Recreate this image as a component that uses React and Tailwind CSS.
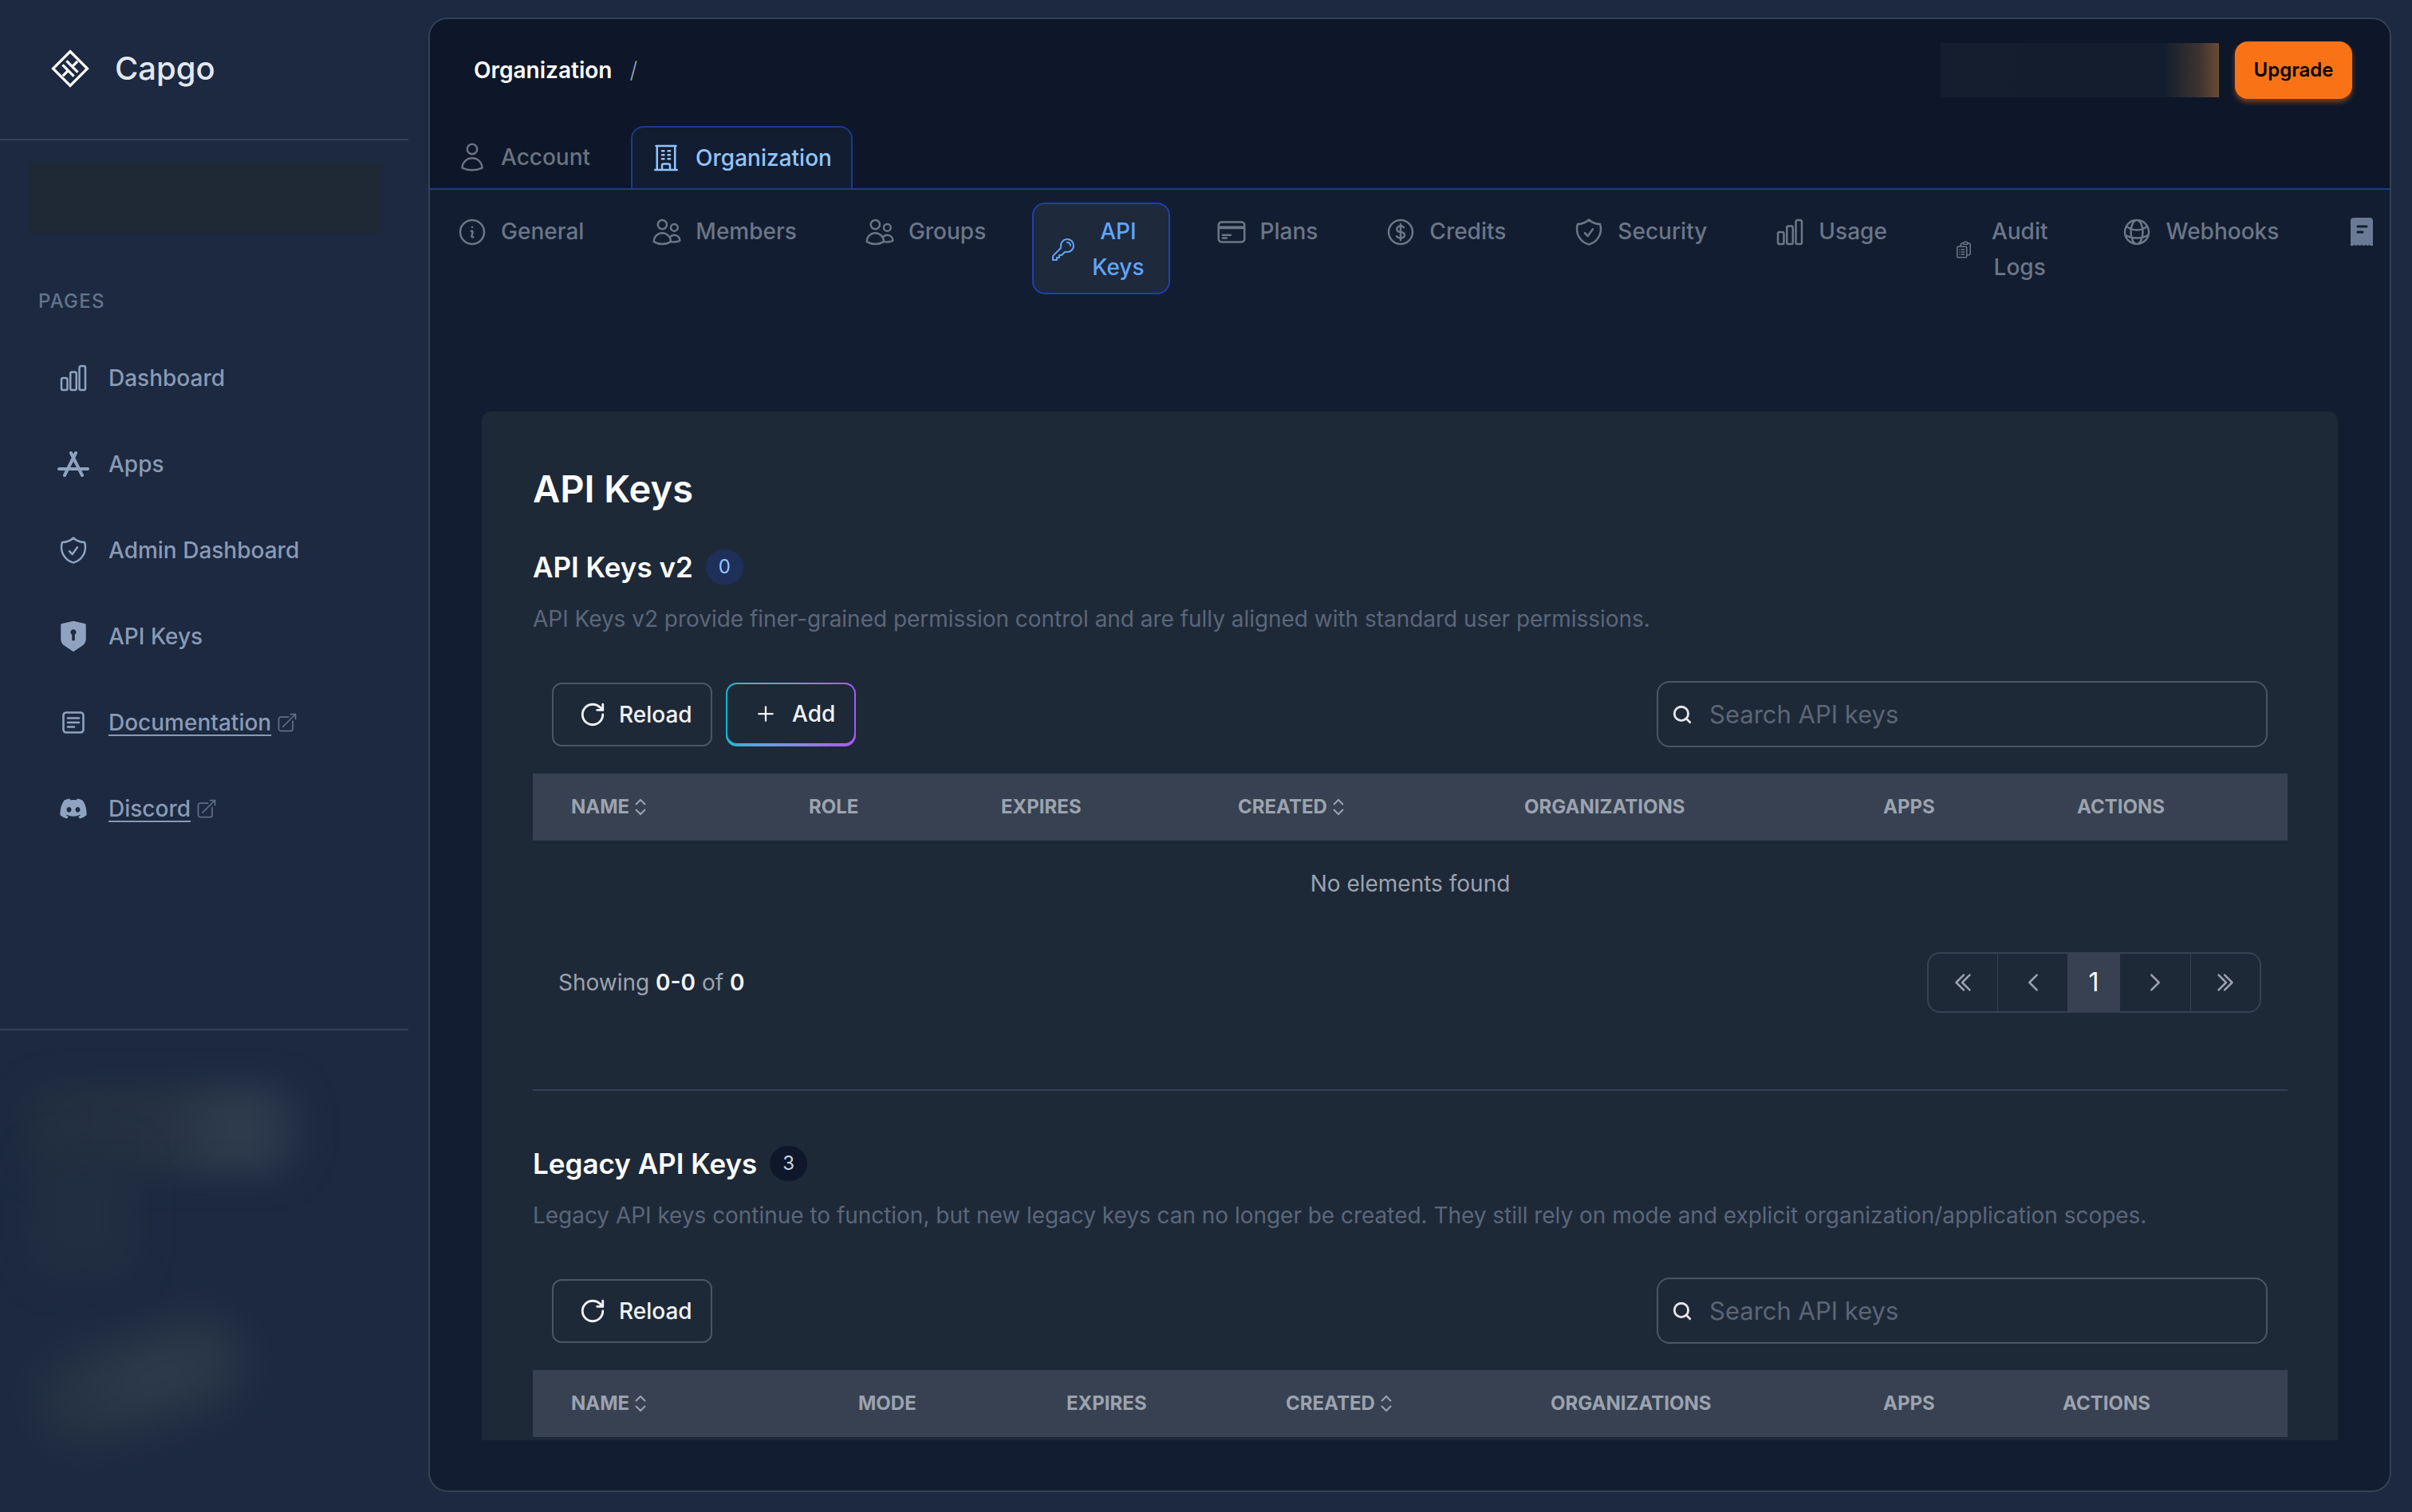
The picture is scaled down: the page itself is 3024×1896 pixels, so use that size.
import React from "react";
import {
  HiOutlineChartBar, HiOutlineShieldCheck, HiOutlineArrowTopRightOnSquare, HiOutlineUser,
  HiOutlineBuildingOffice, HiOutlineInformationCircle, HiOutlineUsers, HiOutlineKey, HiOutlineCreditCard,
  HiOutlineCurrencyDollar, HiOutlineClipboardDocumentList, HiOutlineGlobeAlt,
  HiOutlineChevronDoubleLeft, HiOutlineChevronLeft, HiOutlineChevronRight, HiOutlineChevronDoubleRight,
} from "react-icons/hi2";
import { RiShieldKeyholeFill } from "react-icons/ri";
import { FaDiscord } from "react-icons/fa";
import { RotateCw, Plus, Search } from "lucide-react";

function Logo() {
  return (
    <svg viewBox="0 0 48 48" className="w-[48px] h-[48px] shrink-0" fill="none" stroke="white" strokeWidth="3.2">
      <path d="M24 2.5 45.5 24 24 45.500 2.500 24Z" />
      <g transform="rotate(-45 24 24)">
        <path d="M20.500 14v20M27.500 14v20M11 24h9.500M27.500 24H37" />
      </g>
    </svg>
  );
}

function AppStoreIcon() {
  return (
    <svg viewBox="0 0 40 32" className="w-[40px] h-[32px]" fill="none" stroke="currentColor" strokeWidth="4" strokeLinecap="round">
      <path d="M23 2 9 30M17 2l14 28M2 22h36" />
    </svg>
  );
}

function DocIcon() {
  return (
    <svg viewBox="0 0 28 28" className="w-[28px] h-[28px]" fill="none" stroke="currentColor" strokeWidth="2.600" strokeLinecap="round">
      <rect x="1.500" y="1.500" width="25" height="25" rx="3.500" />
      <path d="M7 8.500h14M7 14h14M7 19.500h8" />
    </svg>
  );
}

function ReceiptIcon() {
  return (
    <svg viewBox="0 0 28 36" className="w-[28px] h-[36px] my-[5px] text-[#6b7a94]">
      <path
        fill="currentColor"
        d="M0 4a4 4 0 0 1 4-4h20a4 4 0 0 1 4 4v31q-2.300 1-4.600-1-2.300 2-4.700 0-2.300 2-4.700 0-2.400 2-4.700 0-2.300 2-4.700 0-2.300 2-4.600 1Z"
      />
      <path stroke="#121d31" strokeWidth="3" strokeLinecap="round" d="M9 11h11M9 18h6" />
    </svg>
  );
}

function SortIcon() {
  return (
    <svg viewBox="0 0 16 22" className="w-[16px] h-[22px] shrink-0" fill="none" stroke="currentColor" strokeWidth="2">
      <path d="m2 8 6-6 6 6M2 14l6 6 6-6" />
    </svg>
  );
}

const navItems = [
  { label: "Dashboard", icon: <HiOutlineChartBar className="w-[40px] h-[40px]" /> },
  { label: "Apps", icon: <AppStoreIcon /> },
  { label: "Admin Dashboard", icon: <HiOutlineShieldCheck className="w-[40px] h-[40px]" /> },
  { label: "API Keys", icon: <RiShieldKeyholeFill className="w-[42px] h-[42px]" /> },
  { label: "Documentation", icon: <DocIcon />, link: true },
  { label: "Discord", icon: <FaDiscord className="w-[36px] h-[36px]" />, link: true },
];

function NavItem({ item }) {
  return (
    <li className="h-[108px] flex items-center">
      <span className="w-[48px] ml-[68px] mr-[20px] flex justify-center text-[#8fa3c0]">{item.icon}</span>
      <span className={`text-[28px] leading-[40px] font-medium text-[#8a9ab5] ${item.link ? "underline underline-offset-[5px]" : ""}`}>{item.label}</span>
      {item.link && <HiOutlineArrowTopRightOnSquare className="w-[28px] h-[28px] ml-[6px] text-[#5f6d85]" />}
    </li>
  );
}

function Sidebar() {
  return (
    <aside className="w-[512px] h-full shrink-0 flex flex-col">
      <div className="h-[176px] border-b-2 border-[#334155] pl-[64px] pt-[62px] flex items-start gap-[32px]">
        <Logo />
        <span className="text-[40px] leading-[48px] font-medium text-[#e2e8f0]">Capgo</span>
      </div>
      <div className="ml-[37px] mt-[29px] w-[442px] h-[87px] bg-[#1f2835] blur-[1.5px]" />
      <div className="mt-[68px] pl-[48px] h-[36px] text-[24px] leading-[36px] font-medium tracking-[0.05em] text-[#64748b]">PAGES</div>
      <ul className="mt-[24px]">
        {navItems.map((it) => <NavItem key={it.label} item={it} />)}
      </ul>
      <div className="relative mt-auto h-[606px] border-t-2 border-[#334155] overflow-hidden">
        <div className="absolute left-[28px] top-[70px] w-[350px] h-[110px] rounded-[40px] bg-[linear-gradient(90deg,#222f40,#263243_50%,#303d4f_78%,#263146)] blur-[20px]" />
        <div className="absolute left-[40px] top-[150px] w-[130px] h-[160px] rounded-[30px] bg-[#212e41] blur-[22px]" />
        <div className="absolute left-[40px] top-[375px] w-[270px] h-[130px] rounded-[60px] -rotate-[18deg] bg-[radial-gradient(ellipse_at_60%_50%,#303d4f,#212e40_85%)] blur-[24px]" />
      </div>
    </aside>
  );
}

function TopTab({ icon, label, active }) {
  if (active) {
    return (
      <div className="h-[78px] -mb-[2px] ml-[51px] pl-[22px] pr-[24px] flex items-center gap-[17px] bg-[#121d31] border-2 border-b-0 border-[#1e3a8a] rounded-t-[16px] text-[#93c5fd]">
        {icon}
        <span className="text-[28px] leading-[40px] font-medium">{label}</span>
      </div>
    );
  }
  return (
    <div className="h-[78px] flex items-center gap-[16px] text-[#6b7280]">
      {icon}
      <span className="text-[28px] leading-[40px] font-medium">{label}</span>
    </div>
  );
}

const icon40 = "w-[40px] h-[40px] shrink-0";
const subTabs = [
  { label: "General", icon: <HiOutlineInformationCircle className={icon40} /> },
  { label: "Members", icon: <HiOutlineUsers className={icon40} /> },
  { label: "Groups", icon: <HiOutlineUsers className={icon40} /> },
  { label: "API Keys", icon: <HiOutlineKey className="w-[32px] h-[32px] shrink-0" />, active: true, box: "pl-[21px] pr-[30px] gap-[20px]" },
  { label: "Plans", icon: <HiOutlineCreditCard className={icon40} />, box: "pl-[27px] pr-[28px] gap-[16px]" },
  { label: "Credits", icon: <HiOutlineCurrencyDollar className={icon40} /> },
  { label: "Security", icon: <HiOutlineShieldCheck className={icon40} /> },
  { label: "Usage", icon: <HiOutlineChartBar className={icon40} /> },
  { label: "Audit Logs", icon: <HiOutlineClipboardDocumentList className="w-[24px] h-[24px] shrink-0" />, box: "pl-[24px] pr-[36px] gap-[23px]" },
  { label: "Webhooks", icon: <HiOutlineGlobeAlt className={icon40} /> },
  { label: "", icon: <ReceiptIcon />, box: "pl-[30px] pr-[28px]" },
];

function SubTab({ tab }) {
  return (
    <div
      className={`shrink-0 flex items-center border-2 rounded-[16px] pt-[12px] pb-[9px] ${tab.box || "pl-[24px] pr-[28px] gap-[16px]"} ${
        tab.active ? "bg-[#1e293b] border-[#1e40af] text-[#60a5fa]" : "border-transparent text-[#6b7688]"
      }`}
    >
      {tab.icon}
      {tab.label && <span className="w-min text-center text-[28px] leading-[45px] font-medium">{tab.label}</span>}
    </div>
  );
}

function Button({ icon, label }) {
  return (
    <button className="h-[80px] w-[201px] rounded-[12px] border-2 border-[#4b5563] flex items-center pl-[32px] gap-[16px] text-[#f1f5f9]">
      {icon}
      <span className="text-[28px] leading-[40px] font-medium">{label}</span>
    </button>
  );
}

function SearchBox() {
  return (
    <div className="w-[766px] h-[83px] rounded-[16px] border-2 border-[#4b5563] flex items-center pl-[17px] gap-[21px]">
      <Search className="w-[26px] h-[26px] text-[#e5e7eb]" strokeWidth={2.6} />
      <span className="text-[31px] leading-[40px] text-[#5b6675]">Search API keys</span>
    </div>
  );
}

function Section({ title, count, badge, desc, children }) {
  return (
    <>
      <div className="flex items-center h-[44px] gap-[16px]">
        <h3 className="text-[35px] leading-[44px] font-semibold text-white">{title}</h3>
        <span className={`w-[47px] h-[44px] rounded-full flex items-center justify-center text-[24px] ${badge}`}>{count}</span>
      </div>
      <p className="mt-[21px] text-[28px] leading-[44px] tracking-[-0.03px] text-[#5b6779]">{desc}</p>
      <div className="mt-[56px] h-[83px] pl-[24px] pr-[25px] flex items-center justify-between">
        {children}
        <SearchBox />
      </div>
    </>
  );
}

function TableHead({ cols }) {
  return (
    <table className="mt-[33px] w-full table-fixed border-collapse">
      <thead>
        <tr className="h-[84px] bg-[#374151] text-[#9ca3af]">
          {cols.map((c) => (
            <th key={c.label} style={{ width: c.w }} className="pl-[48px] text-left text-[24px] font-bold uppercase">
              <span className="inline-flex items-center gap-[6px]">
                {c.label}
                {c.sort && <SortIcon />}
              </span>
            </th>
          ))}
        </tr>
      </thead>
    </table>
  );
}

function Pagination() {
  const cls = "h-full flex items-center justify-center text-[#9ca3af]";
  const ic = "w-[30px] h-[30px]";
  return (
    <div className="h-[76px] flex">
      <div className="w-[89px] border-2 border-r border-[#374151] rounded-l-[16px] flex items-center justify-center text-[#9ca3af]">
        <HiOutlineChevronDoubleLeft className={ic} strokeWidth={2} />
      </div>
      <div className={`${cls} w-[87px] border-y-2 border-[#374151]`}><HiOutlineChevronLeft className={ic} strokeWidth={2} /></div>
      <div className="w-[66px] h-full bg-[#374151] flex items-center justify-center text-[32px] text-white">1</div>
      <div className={`${cls} w-[89px] border-y-2 border-r border-[#374151]`}><HiOutlineChevronRight className={ic} strokeWidth={2} /></div>
      <div className="w-[88px] border-2 border-l-0 border-[#374151] rounded-r-[16px] flex items-center justify-center text-[#9ca3af]">
        <HiOutlineChevronDoubleRight className={ic} strokeWidth={2} />
      </div>
    </div>
  );
}

const v2Cols = [
  { label: "Name", w: 298, sort: true }, { label: "Role", w: 241 }, { label: "Expires", w: 297 },
  { label: "Created", w: 359, sort: true }, { label: "Organizations", w: 450 }, { label: "Apps", w: 243 }, { label: "Actions", w: 312 },
];
const legacyCols = [
  { label: "Name", w: 360, sort: true }, { label: "Mode", w: 261 }, { label: "Expires", w: 275 },
  { label: "Created", w: 332, sort: true }, { label: "Organizations", w: 417 }, { label: "Apps", w: 225 }, { label: "Actions", w: 330 },
];

const reloadIcon = <RotateCw className="w-[34px] h-[34px]" strokeWidth={2} />;

export default function App() {
  return (
    <div className="w-[3024px] h-[1896px] flex overflow-hidden bg-[#1c2940] font-['Inter','Noto_Sans',sans-serif]">
      <Sidebar />
      <main className="flex-1 min-w-0 ml-[25px] mr-[26px] mt-[22px] mb-[25px] flex flex-col overflow-hidden rounded-[24px] border-2 border-[#334155] bg-[#121d31]">
        <header className="bg-[#0d1729] border-b-2 border-[#1e3a8a] pt-[2px]">
          <div className="h-[124px] pl-[55px] pr-[47px] flex items-center">
            <span className="text-[28px] leading-[40px] font-semibold text-white">Organization</span>
            <span className="ml-[22px] text-[28px] font-light text-[#94a3b8]">/</span>
            <div className="ml-auto w-[349px] h-[68px] bg-[linear-gradient(90deg,#141e2f_0%,#131d2e_80%,#3d3431_93%,#6b4b35_100%)]" />
            <button className="ml-[20px] w-[147px] h-[72px] rounded-[16px] bg-[#f97316] shadow-[0_4px_6px_rgba(249,115,22,0.45)] text-[24px] font-semibold text-black">Upgrade</button>
          </div>
          <div className="pt-[8px] pl-[33px] flex">
            <TopTab label="Account" icon={<HiOutlineUser className="w-[40px] h-[40px]" />} />
            <TopTab active label="Organization" icon={<HiOutlineBuildingOffice className="w-[40px] h-[40px]" />} />
          </div>
        </header>
        <nav className="pt-[16px] pl-[7px] flex gap-[28px] items-start overflow-hidden shrink-0">
          {subTabs.map((t) => <SubTab key={t.label} tab={t} />)}
        </nav>
        <div className="flex-1 min-h-0 overflow-hidden mt-[147px] mx-[65px] mb-[63px]">
          <div className="bg-[#1e2938] rounded-t-[12px] pl-[64px] pr-[63px] pt-[67px]">
            <h1 className="text-[47px] leading-[60px] font-semibold text-white">API Keys</h1>
            <div className="mt-[46px]">
              <Section
                title="API Keys v2"
                count="0"
                badge="bg-[#1e2f5a] text-[#93c5fd]"
                desc="API Keys v2 provide finer-grained permission control and are fully aligned with standard user permissions."
              >
                <div className="flex gap-[17px]">
                  <Button label="Reload" icon={reloadIcon} />
                  <div className="w-[163px] h-[80px] rounded-[14px] p-[2px] pb-[4px] bg-gradient-to-r from-[#06b6d4] to-[#a855f7]">
                    <div className="w-full h-full rounded-[12px] bg-[#1e2938] flex items-center pl-[33px] gap-[18px] text-[#f1f5f9]">
                      <Plus className="w-[30px] h-[30px]" strokeWidth={1.8} />
                      <span className="text-[28px] leading-[40px] font-medium">Add</span>
                    </div>
                  </div>
                </div>
              </Section>
              <TableHead cols={v2Cols} />
              <div className="h-[108px] flex items-center justify-center text-[28px] text-[#9ca3af]">No elements found</div>
              <div className="mt-[32px] h-[76px] pl-[32px] pr-[33px] flex items-center justify-between">
                <span className="text-[28px] text-[#9ca3af]">
                  Showing <b className="font-semibold text-[#f1f5f9]">0-0</b> of <b className="font-semibold text-[#f1f5f9]">0</b>
                </span>
                <Pagination />
              </div>
              <div className="mt-[96px] h-[2px] bg-[#334155]" />
              <div className="mt-[69px]">
                <Section
                  title="Legacy API Keys"
                  count="3"
                  badge="bg-[#0f172a] text-[#cbd5e1]"
                  desc="Legacy API keys continue to function, but new legacy keys can no longer be created. They still rely on mode and explicit organization/application scopes."
                >
                  <Button label="Reload" icon={reloadIcon} />
                </Section>
              </div>
              <TableHead cols={legacyCols} />
              <div className="h-[200px]" />
            </div>
          </div>
        </div>
      </main>
    </div>
  );
}
